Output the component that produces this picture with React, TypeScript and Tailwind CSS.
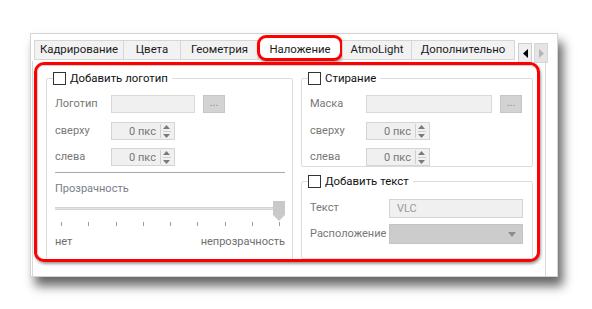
import React from "react";

const font = { fontFamily: 'Roboto, "Noto Sans", Arial, sans-serif' };

function Tab({ label, w }: { label: string; w: string }) {
  return (
    <div
      className={`${w} h-[20px] mb-[1px] -ml-px bg-[#f2f2f2] border border-[#d6d6d6] flex items-center justify-center text-[11.4px] text-[#1b1b1b] leading-none`}
    >
      {label}
    </div>
  );
}

function Legend({ label }: { label: string }) {
  return (
    <div className="absolute -top-[8px] left-[6px] bg-white pr-[4px] flex items-center gap-[4px]">
      <div className="w-[13px] h-[13px] border border-[#333] bg-white" />
      <span className="text-[11.4px] leading-[15px] text-[#111]">{label}</span>
    </div>
  );
}

function Spin() {
  return (
    <div className="w-[64px] h-[18px] bg-[#f0f0f0] border border-[#d4d4d4] flex items-center">
      <span className="flex-1 text-right pr-[4px] text-[11px] text-[#777] leading-none">0 пкс</span>
      <div className="w-[12px] h-[14px] mr-[2px] border-l border-[#cfcfcf] flex flex-col items-center justify-center gap-[2px]">
        <svg width="7" height="4" viewBox="0 0 7 4"><path d="M3.5 0 L7 4 L0 4 Z" fill="#7a7a7a" /></svg>
        <div className="w-[8px] h-px bg-[#cfcfcf]" />
        <svg width="7" height="4" viewBox="0 0 7 4"><path d="M0 0 L7 0 L3.5 4 Z" fill="#7a7a7a" /></svg>
      </div>
    </div>
  );
}

function FileRow({ label, inputW }: { label: string; inputW: string }) {
  return (
    <div className="flex items-center h-[18px]">
      <span className="w-[56px] text-[11px] text-[#777]">{label}</span>
      <div className={`${inputW} h-[18px] bg-[#f0f0f0] border border-[#d9d9d9]`} />
      <div className="ml-[8px] w-[22px] h-[18px] bg-[#d3d3d3] border border-[#c6c6c6] flex items-center justify-center text-[11px] text-[#8a8a8a] leading-none pb-[3px]">
        ...
      </div>
    </div>
  );
}

function SpinRow({ label }: { label: string }) {
  return (
    <div className="flex items-center h-[18px]">
      <span className="w-[56px] text-[11px] text-[#777]">{label}</span>
      <Spin />
    </div>
  );
}

export default function App() {
  const ticks = Array.from({ length: 9 });
  return (
    <div className="w-[592px] h-[309px] bg-white pt-[33px] pl-[30px] overflow-hidden" style={font}>
      <div className="w-[528px] h-[244px] bg-white border border-[#d4d4d4] shadow-[5px_9px_10px_rgba(0,0,0,0.6)] flex flex-col">
        {/* tabs */}
        <div className="h-[27px] flex items-end pl-[4px]">
          <Tab label="Кадрирование" w="w-[90px]" />
          <Tab label="Цвета" w="w-[58px]" />
          <Tab label="Геометрия" w="w-[79px]" />
          <div className="w-[86px] h-[26px] -ml-[2px] rounded-[9px] border-[3px] border-[#ff0000] bg-white shadow-[1px_2px_3px_rgba(0,0,0,0.35)] flex items-center justify-center pt-[3px] text-[11.4px] text-[#1b1b1b] leading-none">
            Наложение
          </div>
          <Tab label="AtmoLight" w="w-[70px]" />
          <Tab label="Дополнительно" w="w-[104px]" />
          <div className="ml-[3px] mb-[-2px] w-[14px] h-[20px] bg-[#efefef] border border-[#cfcfcf] flex items-center justify-center">
            <svg width="5" height="9" viewBox="0 0 5 9"><path d="M5 0 L0 4.5 L5 9 Z" fill="#000" /></svg>
          </div>
          <div className="ml-[2px] mb-[-2px] w-[14px] h-[20px] bg-[#e4e4e4] border border-[#d6d6d6] flex items-center justify-center">
            <svg width="5" height="9" viewBox="0 0 5 9"><path d="M0 0 L5 4.5 L0 9 Z" fill="#b4b4b4" /></svg>
          </div>
        </div>
        {/* page */}
        <div className="ml-[1px] w-[514px] flex-1 border-x border-[#d8d8d8]">
          <div className="mt-[1px] ml-[1px] w-[506px] h-[200px] rounded-[10px] border-[3px] border-[#ff0000] bg-white shadow-[1px_2px_3px_rgba(0,0,0,0.4)] overflow-hidden">
            <div className="w-full h-full rounded-[7px] border-l border-t border-[#d0d0d0] flex pl-[8px] pt-[12px] gap-[8px]">
              {/* left group */}
              <div className="relative w-[247px] h-[200px] border border-[#dcdcdc] rounded-[2px] shrink-0">
                <Legend label="Добавить логотип" />
                <div className="pl-[8px] pt-[16px] flex flex-col">
                  <FileRow label="Логотип" inputW="w-[84px]" />
                  <div className="mt-[9px]"><SpinRow label="сверху" /></div>
                  <div className="mt-[8px]"><SpinRow label="слева" /></div>
                  <div className="mt-[6px] w-[230px] h-px bg-[#a9a9a9]" />
                  <div className="mt-[8px] text-[11px] leading-[16px] text-[#7a7d8a]">Прозрачность</div>
                  <div className="relative mt-[4px] w-[230px] h-[20px]">
                    <div className="absolute left-0 top-[6px] w-[224px] h-[3px] bg-[#e3e3e3] border-y border-[#d5d5d5]" />
                    <svg className="absolute left-[218px] top-0" width="12" height="20" viewBox="0 0 12 20">
                      <path d="M0 0 H12 V14 L6 20 L0 14 Z" fill="#c9c9c9" />
                    </svg>
                  </div>
                  <div className="mt-[1px] ml-[6px] w-[219px] flex justify-between">
                    {ticks.map((_, i) => (
                      <div key={i} className="w-px h-[4px] bg-[#9a9a9a]" />
                    ))}
                  </div>
                  <div className="mt-[8px] w-[230px] flex justify-between text-[11px] leading-[16px] text-[#6e6e6e]">
                    <span>нет</span>
                    <span>непрозрачность</span>
                  </div>
                </div>
              </div>
              {/* right column */}
              <div className="w-[232px] flex flex-col shrink-0">
                <div className="relative h-[98px] border border-[#dcdcdc] rounded-[2px]">
                  <Legend label="Стирание" />
                  <div className="pl-[8px] pt-[16px] flex flex-col">
                    <FileRow label="Маска" inputW="w-[126px]" />
                    <div className="mt-[9px]"><SpinRow label="сверху" /></div>
                    <div className="mt-[8px]"><SpinRow label="слева" /></div>
                  </div>
                </div>
                <div className="relative mt-[14px] h-[100px] border border-[#dcdcdc] rounded-[2px]">
                  <Legend label="Добавить текст" />
                  <div className="pl-[8px] pt-[17px] flex flex-col">
                    <div className="flex items-center h-[19px]">
                      <span className="w-[79px] text-[11px] text-[#777]">Текст</span>
                      <div className="w-[134px] h-[19px] bg-[#f0f0f0] border border-[#d4d4d4] flex items-center pl-[7px] text-[11px] text-[#9a9a9a] leading-none">
                        VLC
                      </div>
                    </div>
                    <div className="mt-[6px] flex items-center h-[20px]">
                      <span className="w-[79px] text-[11px] text-[#777] whitespace-nowrap">Расположение</span>
                      <div className="w-[134px] h-[20px] bg-[#cccccc] border border-[#c4c4c4] flex items-center justify-end pr-[6px]">
                        <svg width="8" height="5" viewBox="0 0 8 5"><path d="M0 0 H8 L4 5 Z" fill="#8c8c8c" /></svg>
                      </div>
                    </div>
                  </div>
                </div>
              </div>
            </div>
          </div>
        </div>
      </div>
    </div>
  );
}
